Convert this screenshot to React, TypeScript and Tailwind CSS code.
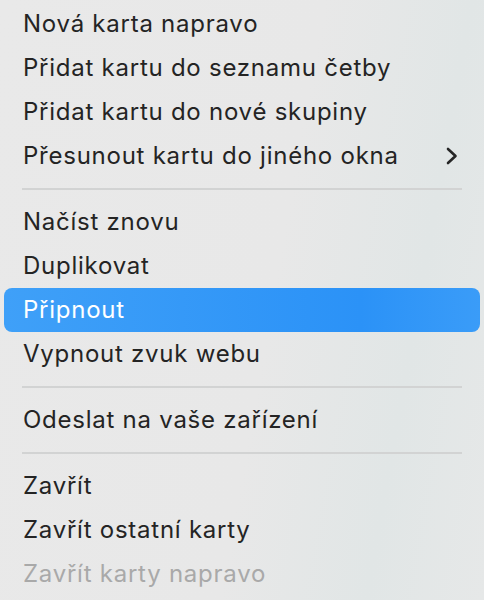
import React from 'react';

type Item = { label: string; submenu?: boolean; active?: boolean; disabled?: boolean } | 'sep';

const ITEMS: Item[] = [
  { label: 'Nová karta napravo' },
  { label: 'Přidat kartu do seznamu četby' },
  { label: 'Přidat kartu do nové skupiny' },
  { label: 'Přesunout kartu do jiného okna', submenu: true },
  'sep',
  { label: 'Načíst znovu' },
  { label: 'Duplikovat' },
  { label: 'Připnout', active: true },
  { label: 'Vypnout zvuk webu' },
  'sep',
  { label: 'Odeslat na vaše zařízení' },
  'sep',
  { label: 'Zavřít' },
  { label: 'Zavřít ostatní karty' },
  { label: 'Zavřít karty napravo', disabled: true },
];

export default function App() {
  return (
    <div className="h-[600px] w-[484px] overflow-hidden bg-[linear-gradient(100deg,#e9e9e9_0%,#e8e8e8_55%,#e1e6e6_80%,#e6e8e8_100%)] pt-[2px] font-['Inter',sans-serif] text-[24px] tracking-[0.75px]">
      {ITEMS.map((item, i) =>
        item === 'sep' ? (
          <div key={i} className="flex h-[22px] items-center px-[22px]">
            <div className="h-[2px] w-full bg-[#d2d3d3]" />
          </div>
        ) : (
          <div
            key={i}
            className={
              item.active
                ? 'mx-[4px] flex h-[44px] items-center rounded-[8px] bg-[linear-gradient(90deg,#3fa0f8,#2b92f7_75%,#3a9cf8)] px-[19px] text-white'
                : 'flex h-[44px] items-center px-[23px] ' + (item.disabled ? 'text-[#a9a9a9]' : 'text-[#242424]')
            }
          >
            <span className="flex-1">{item.label}</span>
            {item.submenu && (
              <svg width="14" height="18" viewBox="0 0 14 18" className="mr-[2px]">
                <path d="M3 2 L10.5 9 L3 16" fill="none" stroke="#262626" strokeWidth="2.6" strokeLinecap="round" strokeLinejoin="round" />
              </svg>
            )}
          </div>
        )
      )}
    </div>
  );
}
